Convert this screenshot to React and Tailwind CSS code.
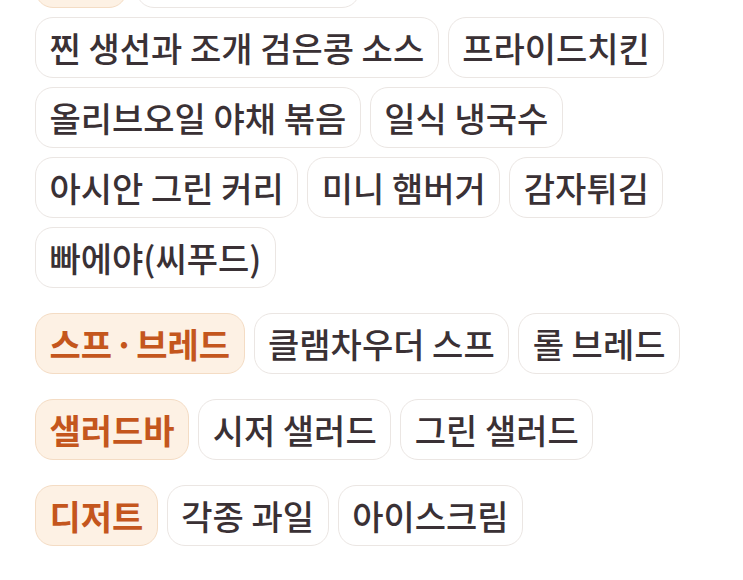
import React from "react";

const sections = [
  { title: "메인", items: ["비프 스테이크", "찐 생선과 조개 검은콩 소스", "프라이드치킨", "올리브오일 야채 볶음", "일식 냉국수", "아시안 그린 커리", "미니 햄버거", "감자튀김", "빠에야(씨푸드)"] },
  {
    title: (
      <>
        스프<span className="mx-[2px]">·</span>브레드
      </>
    ),
    key: "soup",
    items: ["클램차우더 스프", "롤 브레드"],
  },
  { title: "샐러드바", items: ["시저 샐러드", "그린 샐러드"] },
  { title: "디저트", items: ["각종 과일", "아이스크림"] },
];

const chipBase =
  "h-[61px] flex items-center px-[13.5px] rounded-[18px] border text-[34px] whitespace-nowrap";

function Chip({ label, category }) {
  return (
    <span
      className={
        category
          ? `${chipBase} bg-[#fdf1e4] border-[#f4dcc4] text-[#c4561d] font-bold`
          : `${chipBase} bg-white border-[#ebe6e3] text-[#3a3135] font-medium`
      }
    >
      {label}
    </span>
  );
}

export default function App() {
  return (
    <div
      className="min-h-screen bg-white px-[35px]"
      style={{ fontFamily: '"Noto Sans CJK KR", "Noto Sans", sans-serif' }}
    >
      <div className="-mt-[53px] flex flex-col gap-[25px] pb-[34px]">
        {sections.map((s) => (
          <div key={s.key || s.title} className="flex flex-wrap gap-[9px]">
            <Chip label={s.title} category />
            {s.items.map((item) => (
              <Chip key={item} label={item} />
            ))}
          </div>
        ))}
      </div>
    </div>
  );
}
